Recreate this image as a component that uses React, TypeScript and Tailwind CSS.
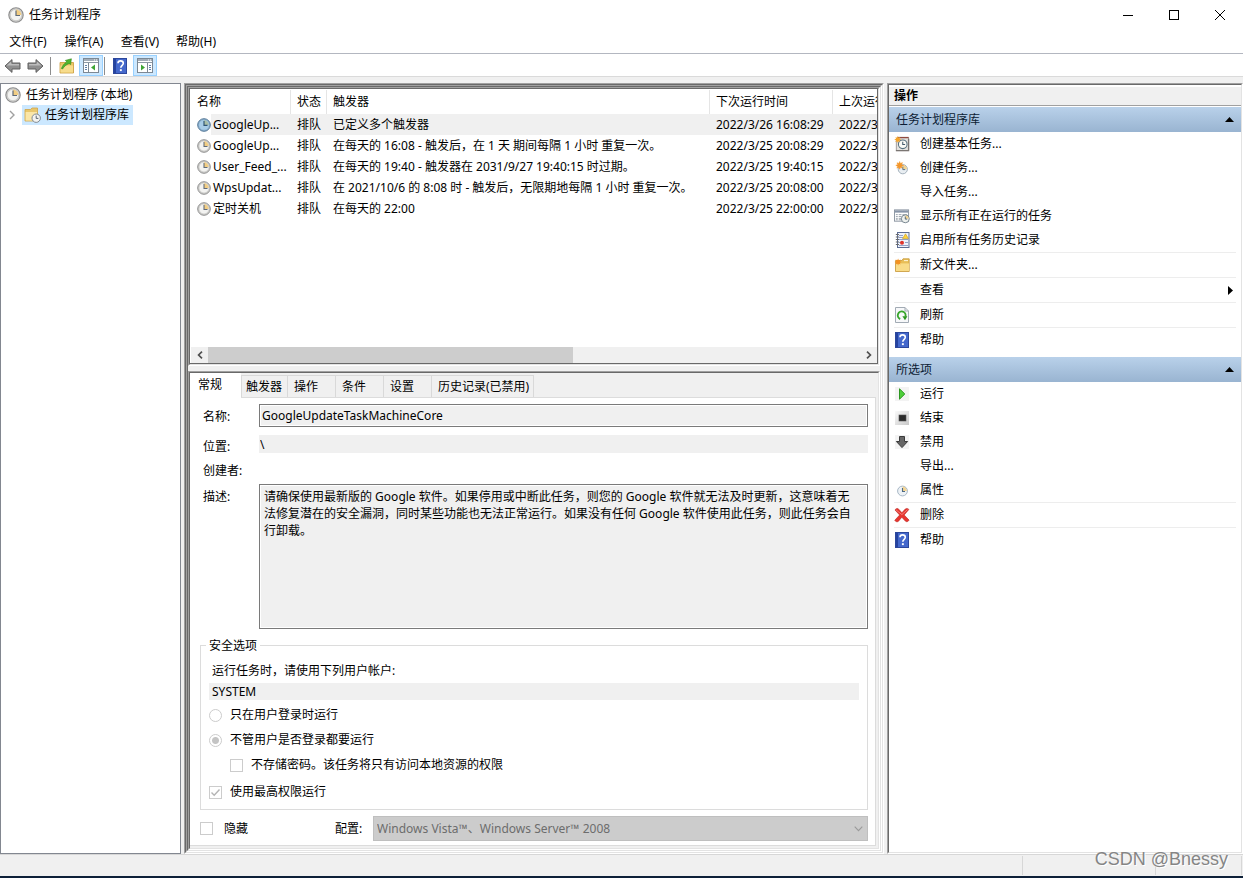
import React from 'react';

type Kids = { children?: React.ReactNode; className?: string };

function Clock({ size = 16, face = '#f3f3f1', ring = '#8b8b8b' }: { size?: number; face?: string; ring?: string }) {
  return (
    <svg width={size} height={size} viewBox="0 0 16 16" className="shrink-0" aria-hidden="true">
      <circle cx="8" cy="8" r="7.2" fill="#d2d2d0" stroke={ring} strokeWidth="1.1" />
      <circle cx="8" cy="8" r="5.7" fill={face} stroke="#b4b4b2" strokeWidth="0.5" />
      <path d="M8 8V2.6A5.4 5.4 0 0 1 13.4 8z" fill="#f1cd83" />
      <path d="M8 3.4V8.5H12" fill="none" stroke="#5f6a78" strokeWidth="1.2" />
    </svg>
  );
}

function SelectedClock() {
  return (
    <svg width="14" height="14" viewBox="0 0 16 16" className="shrink-0" aria-hidden="true">
      <circle cx="8" cy="8" r="7.2" fill="#8fb4d2" stroke="#4f7392" strokeWidth="1.1" />
      <circle cx="8" cy="8" r="5.5" fill="#a9cde8" />
      <path d="M8 8V2.6A5.4 5.4 0 0 1 13.4 8z" fill="#a8bda6" />
      <path d="M8 3.4V8.5H12" fill="none" stroke="#2f5474" strokeWidth="1.3" />
    </svg>
  );
}

function ToolArrow({ flip = false }: { flip?: boolean }) {
  return (
    <svg width="17" height="16" viewBox="0 0 17 16" className={flip ? 'shrink-0 -scale-x-100' : 'shrink-0'} aria-hidden="true">
      <path d="M1 8L8 1.6V5H16V11H8V14.4z" fill="#8f8f8f" stroke="#5e5e5e" strokeWidth="1" />
      <path d="M2.6 7.6L7.2 3.6V6H15V7.6z" fill="#bcbcbc" />
    </svg>
  );
}

function FolderUp() {
  return (
    <svg width="16" height="16" viewBox="0 0 16 16" aria-hidden="true">
      <path d="M1 4.5H7L8 6H10L11 4.5H14.5V15H1z" fill="#ecc766" stroke="#c99b3a" strokeWidth="0.8" />
      <path d="M1.5 7.5H14V14.5H1.5z" fill="#f7dc8c" />
      <path d="M2.4 10.6C3.4 7.6 5.2 5.4 7.8 4L6.4 2.4L12.4 0.8L11.6 6.6L10 5.4C7.4 6.6 5 8.4 3.6 11z" fill="#4fb52e" stroke="#2f8a1a" strokeWidth="0.6" />
    </svg>
  );
}

function PaneIcon({ right = false }: { right?: boolean }) {
  return (
    <svg width="18" height="15" viewBox="0 0 18 15" aria-hidden="true">
      <rect x="1.5" y="0.5" width="15" height="14" fill="#fff" stroke="#7c8894" />
      <rect x="2" y="1" width="14" height="2" fill="#a3adb8" />
      <path d="M12 2H13M14 2H15" stroke="#fff" />
      <path d="M2 4.5H16" stroke="#8d99a5" />
      {right ? (
        <>
          <path d="M11.5 5V14" stroke="#7c8894" />
          <path d="M5 6.5V12.5L9 9.5z" fill="#3fa535" />
          <path d="M13 7.5H15M13 9.5H15M13 11.5H15" stroke="#5f7fa8" />
        </>
      ) : (
        <>
          <path d="M6.5 5V14" stroke="#7c8894" />
          <path d="M13 6.5V12.5L9 9.5z" fill="#3fa535" />
          <path d="M3 7.5H5M3 9.5H5M3 11.5H5" stroke="#5f7fa8" />
        </>
      )}
    </svg>
  );
}

function HelpIcon() {
  return (
    <svg width="14" height="16" viewBox="0 0 14 16" aria-hidden="true">
      <rect x="0.5" y="0.5" width="13" height="15" fill="#4468cc" stroke="#2c479c" />
      <path d="M1 1H3V15H1z" fill="#25439f" />
      <path d="M5 5.3C5 3.6 6.2 2.9 7.5 2.9C9.2 2.9 10.3 3.8 10.3 5.3C10.3 7.3 7.8 7.4 7.8 9.8" fill="none" stroke="#fff" strokeWidth="1.6" />
      <rect x="6.9" y="11.2" width="1.9" height="1.9" fill="#fff" />
    </svg>
  );
}

function FolderClock() {
  return (
    <svg width="17" height="16" viewBox="0 0 17 16" className="shrink-0" aria-hidden="true">
      <path d="M1 2.5H6.5L8 1H13.5V14H1z" fill="#e9c76c" stroke="#cfa54a" strokeWidth="0.8" />
      <path d="M1.6 5H13V13.6H1.6z" fill="#fae6a8" />
      <circle cx="12.2" cy="11.2" r="4.2" fill="#f4f4f2" stroke="#7f8891" />
      <path d="M12.2 8.6V11.4H14.4" fill="none" stroke="#5d6873" />
    </svg>
  );
}

const SPARK = 'M4 0L5 2.6L7.6 1.4L6.4 4L9 5L6.4 6L7.4 8.4L5 7.4L4 10L3 7.4L0.4 8.6L1.6 6L-1 5L1.6 4L0.6 1.6L3 2.6z';

function BasicTaskIcon() {
  return (
    <svg width="16" height="16" viewBox="0 0 17 17" aria-hidden="true">
      <path d="M3.5 1.5H15.5V15.5H2.5V5z" fill="#e4e2df" stroke="#a19b98" />
      <path d="M4 1H15.5V2.4H4z" fill="#8f4a40" />
      <path d="M2 15.5H15.5V3" fill="none" stroke="#7b7673" strokeWidth="1.4" />
      <circle cx="9.3" cy="8.8" r="4.6" fill="#fafaf6" stroke="#56707e" strokeWidth="1.1" />
      <path d="M9.3 6V9H11.8" fill="none" stroke="#42596a" strokeWidth="1.1" />
      <g transform="translate(1 0) scale(.75)"><path d={SPARK} fill="#f6a52a" /></g>
    </svg>
  );
}

function NewTaskIcon() {
  return (
    <svg width="16" height="16" viewBox="0 0 16 16" aria-hidden="true">
      <circle cx="8.8" cy="9.2" r="4.6" fill="#e9eef2" stroke="#a5b2bd" />
      <path d="M8.8 9.2V5A4.2 4.2 0 0 1 13 9.2z" fill="#f3d493" />
      <path d="M8.8 6.6V9.6H11.2" fill="none" stroke="#56728a" />
      <g transform="translate(2.6 1.6) scale(.76)"><path d={SPARK} fill="#f4962a" stroke="#f4962a" strokeWidth="0.8" /></g>
    </svg>
  );
}

function RunningIcon() {
  return (
    <svg width="16" height="16" viewBox="0 0 17 16" aria-hidden="true">
      <rect x="0.5" y="1.5" width="15" height="12" fill="#fff" stroke="#8a94a0" />
      <rect x="1" y="2" width="14" height="2.4" fill="#8895a8" />
      <path d="M2 6.5H4M5 6.5H8M9 6.5H14M2 8.5H4M5 8.5H8M2 10.5H4M5 10.5H8M2 12H4M5 12H8" stroke="#9aa3ac" />
      <circle cx="12" cy="11" r="4.2" fill="#eef1ee" stroke="#71808b" />
      <path d="M12 11V7.4A3.6 3.6 0 0 1 15.6 11z" fill="#f3d493" />
      <path d="M12 8.6V11.3H14" fill="none" stroke="#4c6172" />
    </svg>
  );
}

function HistoryIcon() {
  return (
    <svg width="15" height="16" viewBox="0 0 15 16" aria-hidden="true">
      <rect x="2.5" y="0.5" width="11.5" height="15" fill="#eef2fb" stroke="#5c6c92" />
      <path d="M4 3.5H8M4 5.5H8M4 7.5H13M4 10.5H6M10 10.5H13M4 13.5H13" stroke="#93a1c6" />
      <path d="M0.8 2.5H4M0.8 5H4M0.8 7.5H4M0.8 10H4M0.8 12.5H4" stroke="#6b6b6b" strokeWidth="1.1" />
      <path d="M10.5 1.8L13.4 6.6H7.6z" fill="#ffd23a" stroke="#c79c14" strokeWidth="0.6" />
      <circle cx="7" cy="10.8" r="2" fill="#e0342c" />
    </svg>
  );
}

function NewFolderIcon() {
  return (
    <svg width="16" height="16" viewBox="0 0 16 16" aria-hidden="true">
      <path d="M1.5 3.5H8L9 1.8H15.2V14.5H1.5z" fill="#e8bf58" stroke="#c8983a" strokeWidth="0.8" />
      <path d="M2 6.4H15V14H2z" fill="#f9dc88" />
      <path d="M10 3.6H14" stroke="#fff7dc" />
      <g transform="translate(1.2 1.4) scale(.72)"><path d={SPARK} fill="#f3901f" /></g>
    </svg>
  );
}

function RefreshIcon() {
  return (
    <svg width="14" height="16" viewBox="0 0 14 16" aria-hidden="true">
      <path d="M0.5 0.5H10L13.5 4V15.5H0.5z" fill="#f7f8fa" stroke="#a2abb4" />
      <path d="M10 0.5V4H13.5" fill="none" stroke="#a2abb4" />
      <path d="M5.2 12A3.9 3.9 0 1 1 10.4 9.6" fill="none" stroke="#37a62b" strokeWidth="1.9" />
      <path d="M7.4 9.2H12.4L10 13.2z" fill="#2b961f" />
    </svg>
  );
}

function RunIcon() {
  return (
    <svg width="14" height="14" viewBox="0 0 14 14" aria-hidden="true">
      <rect width="14" height="14" fill="#f3f3f3" />
      <path d="M4.5 1.8V12.2L9.8 7z" fill="#4fcf3b" stroke="#2b961f" />
    </svg>
  );
}

function StopIcon() {
  return (
    <svg width="14" height="14" viewBox="0 0 14 14" aria-hidden="true">
      <defs>
        <linearGradient id="stopBack" x1="0" y1="0" x2="1" y2="1">
          <stop offset="0" stopColor="#fafafa" />
          <stop offset="1" stopColor="#c8c8c8" />
        </linearGradient>
      </defs>
      <rect width="14" height="14" fill="url(#stopBack)" />
      <rect x="4" y="4" width="7" height="6" fill="#2b2b2b" stroke="#555" strokeWidth="0.6" />
    </svg>
  );
}

function DisableIcon() {
  return (
    <svg width="14" height="14" viewBox="0 0 14 14" aria-hidden="true">
      <rect width="14" height="14" fill="#f3f3f3" />
      <path d="M4.5 1.5H9.5V6.5H12.6L7 12.6L1.4 6.5H4.5z" fill="#666" stroke="#3a3a3a" />
    </svg>
  );
}

function PropertiesIcon() {
  return (
    <svg width="16" height="16" viewBox="0 0 16 16" aria-hidden="true">
      <circle cx="8.5" cy="9" r="4.9" fill="#eef2f6" stroke="#a8b8c6" />
      <path d="M8.5 9V4.6A4.4 4.4 0 0 1 12.9 9z" fill="#f3d493" />
      <path d="M8.5 6V9.5H11" fill="none" stroke="#4f6b84" strokeWidth="1.1" />
    </svg>
  );
}

function DeleteIcon() {
  return (
    <svg width="16" height="16" viewBox="0 0 17 16" aria-hidden="true">
      <path d="M1 2.6C2.4 0.8 4 0.6 5 1.8L8.4 5.6L12 1.6C13.2 0.6 15 1 15.8 2.2L10.8 8L16 13.4C15 15.4 13 15.6 12 14.4L8.3 10.4L4.8 14.6C3.4 15.8 1.4 15 0.8 13.6L6 8z" fill="#e8352f" stroke="#b8231e" strokeWidth="0.6" />
      <path d="M2.2 2.6L8.4 7.6L14.2 2.4" fill="none" stroke="#f58a84" strokeWidth="0.9" />
    </svg>
  );
}

/* Two-pixel sunken edge: dark on the top and left, light on the bottom and right. */
function Sunken({ children, className = '' }: Kids) {
  return (
    <div className={`flex flex-col border border-t-[#a0a0a0] border-l-[#a0a0a0] border-r-white border-b-white ${className}`}>
      <div className="flex min-h-0 flex-1 flex-col border border-t-[#696969] border-l-[#696969] border-r-[#e3e3e3] border-b-[#e3e3e3]">
        {children}
      </div>
    </div>
  );
}

const tasks = [
  ['GoogleUp...', '排队', '已定义多个触发器', '2022/3/26 16:08:29', '2022/3/25'],
  ['GoogleUp...', '排队', '在每天的 16:08 - 触发后，在 1 天 期间每隔 1 小时 重复一次。', '2022/3/25 20:08:29', '2022/3/25'],
  ['User_Feed_...', '排队', '在每天的 19:40 - 触发器在 2031/9/27 19:40:15 时过期。', '2022/3/25 19:40:15', '2022/3/25'],
  ['WpsUpdat...', '排队', '在 2021/10/6 的 8:08 时 - 触发后，无限期地每隔 1 小时 重复一次。', '2022/3/25 20:08:00', '2022/3/25'],
  ['定时关机', '排队', '在每天的 22:00', '2022/3/25 22:00:00', '2022/3/25'],
];

type Action = { label: string; icon?: React.ReactNode; line?: boolean; sub?: boolean };

const libraryActions: Action[] = [
  { label: '创建基本任务...', icon: <BasicTaskIcon /> },
  { label: '创建任务...', icon: <NewTaskIcon /> },
  { label: '导入任务...' },
  { label: '显示所有正在运行的任务', icon: <RunningIcon /> },
  { label: '启用所有任务历史记录', icon: <HistoryIcon /> },
  { label: '新文件夹...', icon: <NewFolderIcon />, line: true },
  { label: '查看', line: true, sub: true },
  { label: '刷新', icon: <RefreshIcon />, line: true },
  { label: '帮助', icon: <HelpIcon />, line: true },
];

const itemActions: Action[] = [
  { label: '运行', icon: <RunIcon /> },
  { label: '结束', icon: <StopIcon /> },
  { label: '禁用', icon: <DisableIcon /> },
  { label: '导出...' },
  { label: '属性', icon: <PropertiesIcon /> },
  { label: '删除', icon: <DeleteIcon />, line: true },
  { label: '帮助', icon: <HelpIcon />, line: true },
];

function ActionGroup({ title, items }: { title: string; items: Action[] }) {
  return (
    <section className="mb-[5px]">
      <button className="flex h-[25px] w-full items-center justify-between bg-linear-to-b from-[#b9d1ea] to-[#99b4d1] pr-[7px] pl-[7px] text-left">
        <span className="text-[#0b1c33]">{title}</span>
        <svg width="9" height="5" viewBox="0 0 9 5" aria-hidden="true"><path d="M4.5 0L9 5H0z" /></svg>
      </button>
      <ul className="pr-[5px] pl-[5px]">
        {items.map((a) => (
          <li key={a.label} className={a.line ? 'border-t border-[#ededed]' : ''}>
            <button className="flex h-6 w-full items-center text-left">
              <span className="flex w-4 items-center justify-center">{a.icon}</span>
              <span className="ml-[10px] flex-1">{a.label}</span>
              {a.sub && <svg width="5" height="9" viewBox="0 0 5 9" className="mr-[3px]" aria-hidden="true"><path d="M0 0L5 4.5L0 9z" /></svg>}
            </button>
          </li>
        ))}
      </ul>
    </section>
  );
}

const radioClass =
  "size-[13px] shrink-0 appearance-none rounded-full border border-[#cccccc] bg-white checked:bg-[radial-gradient(circle,#c4c4c4_0_3px,#fff_4px)]";

function Check({ id, checked = false }: { id: string; checked?: boolean }) {
  return (
    <span className="relative flex size-[13px] shrink-0">
      <input id={id} type="checkbox" disabled defaultChecked={checked} className="size-[13px] appearance-none border border-[#cccccc] bg-white" />
      {checked && (
        <svg width="13" height="13" viewBox="0 0 13 13" className="pointer-events-none absolute inset-0" aria-hidden="true">
          <path d="M2.5 6.5L5.2 9.2L10.5 3.5" fill="none" stroke="#b4b4b4" strokeWidth="1.4" />
        </svg>
      )}
    </span>
  );
}

const description =
  '请确保使用最新版的 Google 软件。如果停用或中断此任务，则您的 Google 软件就无法及时更新，这意味着无法修复潜在的安全漏洞，同时某些功能也无法正常运行。如果没有任何 Google 软件使用此任务，则此任务会自行卸载。';

export default function App() {
  return (
    <div className="flex h-screen flex-col overflow-hidden bg-[#f0f0f0] font-['Noto_Sans','Noto_Sans_CJK_SC',sans-serif] text-[12px] leading-[16px] text-black">
      <header className="bg-white">
        <div className="flex h-[29px] items-center pl-2">
          <Clock />
          <h1 className="ml-[5px] flex-1">任务计划程序</h1>
          <button aria-label="最小化" className="flex h-full w-[46px] items-center justify-center">
            <svg width="10" height="10" viewBox="0 0 10 10"><path d="M0 5.5H10" stroke="#000" /></svg>
          </button>
          <button aria-label="最大化" className="flex h-full w-[46px] items-center justify-center">
            <svg width="10" height="10" viewBox="0 0 10 10"><rect x="0.5" y="0.5" width="9" height="9" fill="none" stroke="#000" /></svg>
          </button>
          <button aria-label="关闭" className="flex h-full w-[46px] items-center justify-center">
            <svg width="10" height="10" viewBox="0 0 10 10"><path d="M0 0L10 10M10 0L0 10" stroke="#000" /></svg>
          </button>
        </div>
        <nav className="flex h-[25px] items-center gap-4 border-b border-[#b3b7c0] pt-[2px] pl-2">
          <button className="w-10 whitespace-nowrap">文件(F)</button>
          <button className="w-10 whitespace-nowrap">操作(A)</button>
          <button className="w-10 whitespace-nowrap">查看(V)</button>
          <button className="w-10 whitespace-nowrap">帮助(H)</button>
        </nav>
        <div className="flex h-[23px] items-center border-b border-[#dadada] pt-px pl-1">
          <button aria-label="后退"><ToolArrow /></button>
          <button aria-label="前进" className="ml-[6px]"><ToolArrow flip /></button>
          <span className="ml-[6px] h-[18px] w-px bg-[#8d8d8d]" />
          <button aria-label="向上" className="ml-2"><FolderUp /></button>
          <button aria-label="显示控制台树" className="ml-1 flex h-[21px] w-6 items-center justify-center border border-[#99d1ff] bg-[#cce8ff]"><PaneIcon /></button>
          <span className="ml-px h-[18px] w-px bg-[#8d8d8d]" />
          <button aria-label="帮助" className="ml-2"><HelpIcon /></button>
          <button aria-label="显示操作窗格" className="ml-[6px] flex h-[21px] w-6 items-center justify-center border border-[#99d1ff] bg-[#cce8ff]"><PaneIcon right /></button>
        </div>
      </header>

      <main className="flex min-h-0 flex-1 pt-[6px]">
        <aside className="w-[181px] shrink-0 border border-[#828790] bg-white pt-px">
          <ul>
            <li>
              <button className="flex h-5 items-center pl-1"><Clock /><span className="ml-[5px]">任务计划程序 (本地)</span></button>
            </li>
            <li className="flex h-5 items-center pl-2">
              <svg width="6" height="10" viewBox="0 0 6 10" aria-hidden="true"><path d="M1 1L5 5L1 9" fill="none" stroke="#a0a0a0" strokeWidth="1.4" /></svg>
              <button className="ml-[7px] flex h-5 items-center bg-[#cce8ff] pr-1 pl-[2px]"><FolderClock /><span className="ml-1">任务计划程序库</span></button>
            </li>
          </ul>
        </aside>

        <Sunken className="ml-[3px] min-w-0 flex-1">
          <Sunken className="min-h-0 flex-1">
            <Sunken className="h-[279px] shrink-0">
              <div className="flex min-h-0 flex-1 flex-col border-r border-b border-[#696969] bg-white pt-px pl-px">
                <div className="min-h-0 flex-1 overflow-hidden">
                  <table className="w-full table-fixed border-separate border-spacing-0 whitespace-nowrap">
                    <colgroup>
                      <col className="w-[100px]" />
                      <col className="w-[36px]" />
                      <col className="w-[383px]" />
                      <col className="w-[123px]" />
                      <col />
                    </colgroup>
                    <thead>
                      <tr className="h-6 text-left">
                        {['名称', '状态', '触发器', '下次运行时间', '上次运行时间'].map((h, i) => (
                          <th key={h} className={i < 4 ? 'overflow-hidden border-r border-[#e5e5e5] p-0 pl-[6px] font-normal' : 'overflow-hidden p-0 pl-[6px] font-normal'}>{h}</th>
                        ))}
                      </tr>
                    </thead>
                    <tbody>
                      {tasks.map((row, r) => (
                        <tr key={r} className="h-[21px]">
                          <td className="p-0 pl-[6px]">
                            <div className="flex h-[21px] items-center">
                              {r === 0 ? <SelectedClock /> : <Clock size={14} />}
                              <div className={r === 0 ? 'flex h-full min-w-0 flex-1 items-center bg-[#f0f0f0] pl-[2px]' : 'flex h-full min-w-0 flex-1 items-center pl-[2px]'}>
                                {row[0]}
                              </div>
                            </div>
                          </td>
                          {row.slice(1).map((c, i) => (
                            <td key={i} className={r === 0 ? 'overflow-hidden bg-[#f0f0f0] p-0 pl-[6px]' : 'overflow-hidden p-0 pl-[6px]'}>{c}</td>
                          ))}
                        </tr>
                      ))}
                    </tbody>
                  </table>
                </div>
                <div className="flex h-4 items-center bg-[#f0f0f0]">
                  <button aria-label="向左滚动" className="flex h-full w-[17px] items-center justify-center">
                    <svg width="6" height="8" viewBox="0 0 6 8"><path d="M5 0.7L1.6 4L5 7.3" fill="none" stroke="#505050" strokeWidth="1.7" /></svg>
                  </button>
                  <div className="h-full flex-1"><div className="h-full w-[56%] bg-[#cdcdcd]" /></div>
                  <button aria-label="向右滚动" className="flex h-full w-[17px] items-center justify-center">
                    <svg width="6" height="8" viewBox="0 0 6 8"><path d="M1 0.7L4.4 4L1 7.3" fill="none" stroke="#505050" strokeWidth="1.7" /></svg>
                  </button>
                </div>
              </div>
            </Sunken>

            <Sunken className="mt-[5px] min-h-0 flex-1">
              <div className="flex min-h-0 flex-1 flex-col pr-[2px] pb-[2px]">
                <div role="tablist" className="relative flex h-[25px] shrink-0 items-end border-b border-[#dcdcdc]">
                  <button role="tab" aria-selected="true" className="-mb-px h-[25px] w-[51px] bg-white pb-[2px] pl-2 text-left">常规</button>
                  <button role="tab" className="h-[22px] w-[47px] border-t border-r border-l border-[#d9d9d9] pl-1 text-left">触发器</button>
                  <button role="tab" className="h-[22px] w-12 border-t border-r border-[#d9d9d9] pl-[6px] text-left">操作</button>
                  <button role="tab" className="h-[22px] w-12 border-t border-r border-[#d9d9d9] pl-[6px] text-left">条件</button>
                  <button role="tab" className="h-[22px] w-12 border-t border-r border-[#d9d9d9] pl-[6px] text-left">设置</button>
                  <button role="tab" className="h-[22px] w-[102px] border-t border-r border-[#d9d9d9] pl-[6px] text-left whitespace-nowrap">历史记录(已禁用)</button>
                </div>

                <form className="flex min-h-0 flex-1 flex-col border-r border-b border-[#dcdcdc] bg-white pt-[6px] pr-[7px] pl-[10px]">
                  <div className="grid grid-cols-[56px_1fr] pl-[3px]">
                    <label htmlFor="task-name" className="pt-[5px]">名称:</label>
                    <input id="task-name" readOnly value="GoogleUpdateTaskMachineCore" className="h-[23px] border border-[#7a7a7a] bg-[#f0f0f0] px-[2px] shadow-[inset_0_0_0_1px_#fff] outline-none" />
                    <label htmlFor="task-path" className="mt-2 pt-1">位置:</label>
                    <input id="task-path" readOnly value="\" className="mt-2 h-[18px] bg-[#f0f0f0] px-px outline-none" />
                    <span className="mt-2 mb-[5px] whitespace-nowrap">创建者:</span>
                    <span />
                    <label htmlFor="task-desc" className="pt-[5px]">描述:</label>
                    <textarea id="task-desc" readOnly value={description} className="h-[145px] resize-none overflow-hidden border border-[#7a7a7a] bg-[#f0f0f0] pt-[3px] pr-2 pl-1 leading-[17px] shadow-[inset_0_0_0_1px_#fff] outline-none" />
                  </div>

                  <fieldset className="mt-[7px] min-w-0 border border-[#dcdcdc] px-2 pb-[9px]">
                    <legend className="-ml-[3px] px-[3px] pt-[2px]">安全选项</legend>
                    <p className="mt-[9px] pl-[3px]">运行任务时，请使用下列用户帐户:</p>
                    <output className="mt-1 flex h-[17px] items-center bg-[#f0f0f0] pl-[3px]">SYSTEM</output>
                    <label className="mt-[7px] flex items-center gap-2"><input type="radio" name="logon" disabled className={radioClass} />只在用户登录时运行</label>
                    <label className="mt-[9px] flex items-center gap-2"><input type="radio" name="logon" disabled defaultChecked className={radioClass} />不管用户是否登录都要运行</label>
                    <label htmlFor="no-password" className="mt-[9px] flex items-center gap-2 pl-[21px]"><Check id="no-password" />不存储密码。该任务将只有访问本地资源的权限</label>
                    <label htmlFor="highest" className="mt-[11px] flex items-center gap-2"><Check id="highest" checked />使用最高权限运行</label>
                  </fieldset>

                  <div className="mt-[6px] flex items-center">
                    <label htmlFor="hidden-task" className="flex items-center gap-[11px]"><Check id="hidden-task" />隐藏</label>
                    <label htmlFor="configure" className="ml-[87px] w-[38px]">配置:</label>
                    <div className="relative flex flex-1">
                      <select id="configure" disabled className="h-[25px] w-full appearance-none border border-[#bfbfbf] bg-[#cccccc] px-[3px] text-[#6d6d6d] opacity-100">
                        <option>Windows Vista™、Windows Server™ 2008</option>
                      </select>
                      <svg width="9" height="6" viewBox="0 0 9 6" className="pointer-events-none absolute top-[10px] right-[5px]" aria-hidden="true"><path d="M0.7 0.7L4.5 4.7L8.3 0.7" fill="none" stroke="#9a9a9a" strokeWidth="1.1" /></svg>
                    </div>
                  </div>
                </form>
              </div>
            </Sunken>
          </Sunken>
        </Sunken>

        <Sunken className="ml-[3px] w-[356px] shrink-0">
          <div className="min-h-0 flex-1 bg-white pt-[2px]">
            <h2 className="mb-px h-[19px] border-b border-[#a0a0a0] bg-[#f0f0f0] pl-[5px] leading-[18px] font-bold">操作</h2>
            <ActionGroup title="任务计划程序库" items={libraryActions} />
            <ActionGroup title="所选项" items={itemActions} />
          </div>
        </Sunken>
      </main>

      <footer className="relative flex h-6 shrink-0 justify-end border-t border-b-2 border-t-[#d7d7d7] border-b-[#0d2038] pt-px pr-px pb-px">
        <span className="w-[133px] border-l border-[#d7d7d7]" />
        <span className="w-[87px] border-r border-l border-[#d7d7d7]" />
        <span className="absolute right-[15px] bottom-[7px] font-['Liberation_Sans',sans-serif] text-[18px] leading-[20px] text-[#858585] [text-shadow:1px_1px_0_#fff]">CSDN @Bnessy</span>
      </footer>
    </div>
  );
}
